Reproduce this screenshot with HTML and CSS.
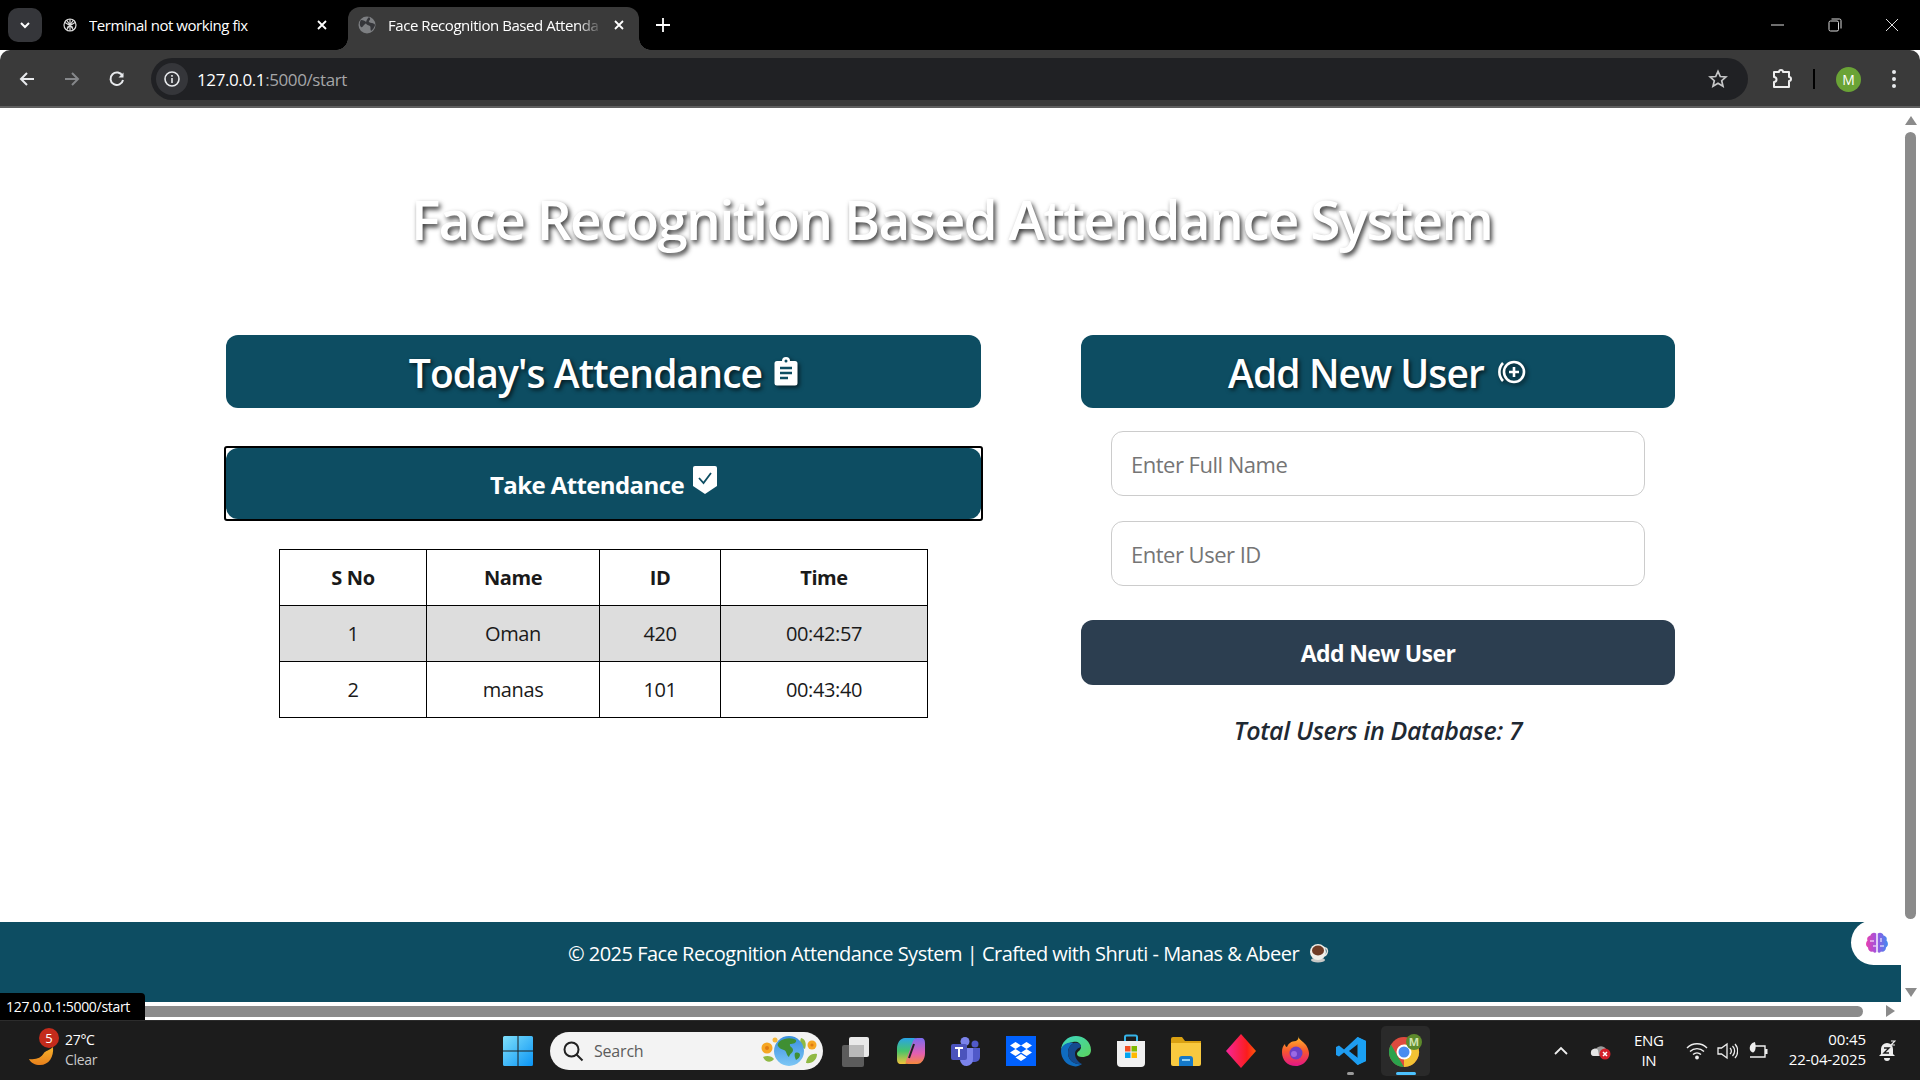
FILE: index.html
```html
<!DOCTYPE html>
<html lang="en">
<head>
    <meta charset="UTF-8">
    <meta name="viewport" content="width=device-width, initial-scale=1.0">
    <title>Face Recognition Based Attendance System</title>
    <link rel="stylesheet" href="styles.css">
</head>
<body>
<div class="window">
    <div class="tabstrip">
        <div class="tab-search">
            <svg width="14" height="14" viewBox="0 0 14 14"><path d="M3 5l4 4 4-4" fill="none" stroke="#fff" stroke-width="2"/></svg>
        </div>
        <div class="tab">
            <svg class="tab-icon" width="16" height="16" viewBox="0 0 16 16" fill="none" stroke="#ddd" stroke-width="1.2"><circle cx="8" cy="8" r="6"/><path d="M3 5.5l8 5M13 5.5l-8 5M8 2v12M4.5 3l7 10M11.5 3l-7 10"/></svg>
            <span class="tab-title">Terminal not working fix</span>
            <svg class="tab-close" width="12" height="12" viewBox="0 0 12 12"><path d="M2 2l8 8M10 2l-8 8" stroke="#fff" stroke-width="1.8"/></svg>
        </div>
        <div class="tab tab-active">
            <svg class="tab-icon" width="18" height="18" viewBox="0 0 18 18"><circle cx="9" cy="9" r="8.5" fill="#7d7f82"/><path d="M3 4c3 0 4 1 5 2s-1 2-2 3-2 3-3 2-2-4 0-7zM11 1c2 2 1 3 0 4s2 2 3 2 3 1 3 2-2 5-4 6c-1-2 0-4-1-5s-4-1-4-3 1-4 3-6z" fill="#35363a"/></svg>
            <span class="tab-title tab-title-fade">Face Recognition Based Attenda</span>
            <svg class="tab-close" width="12" height="12" viewBox="0 0 12 12"><path d="M2 2l8 8M10 2l-8 8" stroke="#fff" stroke-width="1.8"/></svg>
        </div>
        <svg class="new-tab" width="16" height="16" viewBox="0 0 16 16"><path d="M8 1v14M1 8h14" stroke="#fff" stroke-width="1.8"/></svg>
        <div class="window-controls">
            <svg width="14" height="14" viewBox="0 0 14 14"><path d="M0 7h13" stroke="#ddd"/></svg>
            <svg width="14" height="14" viewBox="0 0 14 14" fill="none" stroke="#ddd"><rect x="1" y="3" width="9.500" height="10" rx="1.500"/><path d="M3.500 1h8a1.500 1.500 0 0 1 1.500 1.500v8"/></svg>
            <svg width="14" height="14" viewBox="0 0 14 14"><path d="M1 1l12 12M13 1l-12 12" stroke="#ddd"/></svg>
        </div>
    </div>

    <div class="toolbar">
        <svg class="nav-icon" width="18" height="18" viewBox="0 0 18 18" fill="none" stroke="#e8eaed" stroke-width="2"><path d="M16 9H3M9 3L3 9l6 6"/></svg>
        <svg class="nav-icon" width="18" height="18" viewBox="0 0 18 18" fill="none" stroke="#85878a" stroke-width="2"><path d="M2 9h13M9 3l6 6-6 6"/></svg>
        <svg class="nav-icon" width="18" height="18" viewBox="0 0 18 18" fill="none" stroke="#e8eaed" stroke-width="2"><path d="M14.500 6A6.300 6.300 0 1 0 15 10"/><path d="M15.500 2.500v5h-5z" fill="#e8eaed" stroke="none"/></svg>
        <div class="omnibox">
            <span class="site-info">
                <svg width="18" height="18" viewBox="0 0 18 18" fill="none" stroke="#e8eaed" stroke-width="1.600"><circle cx="9" cy="9" r="7"/><path d="M9 8v5M9 5v1.800"/></svg>
            </span>
            <span class="url">127.0.0.1<span class="url-rest">:5000/start</span></span>
            <svg class="star" width="20" height="20" viewBox="0 0 20 20" fill="none" stroke="#c6c7c8" stroke-width="1.700"><path d="M10 2.300l2.300 5.200 5.600.5-4.200 3.700 1.300 5.500L10 14.300l-5 2.900 1.300-5.500L2.100 8l5.600-.5z"/></svg>
        </div>
        <svg class="puzzle" width="22" height="22" viewBox="0 0 22 22" fill="none" stroke="#eee" stroke-width="2"><path d="M3 4h5a2 2 0 0 1 4 0h6v5a2 2 0 0 1 0 4v6H3v-5a2.500 2.500 0 0 0 0-5z" stroke-linejoin="round"/></svg>
        <span class="toolbar-sep"></span>
        <span class="avatar">M</span>
        <svg class="menu-dots" width="4" height="18" viewBox="0 0 4 18" fill="#e8eaed"><circle cx="2" cy="2" r="2"/><circle cx="2" cy="9" r="2"/><circle cx="2" cy="16" r="2"/></svg>
    </div>

    <div class="viewport">
        <div class="page-col">
            <main class="page">
                <h1 class="page-title">Face Recognition Based Attendance System</h1>
                <div class="columns">
                    <section class="col-left">
                        <h2 class="panel-head">Today's Attendance
                            <svg class="head-icon" width="24" height="29" viewBox="0 0 24 29"><path d="M3 4h5a4 4 0 0 1 8 0h5a2.500 2.500 0 0 1 2.500 2.500V26A2.500 2.500 0 0 1 21 28.500H3A2.500 2.500 0 0 1 .5 26V6.500A2.500 2.500 0 0 1 3 4z" fill="#fff"/><path d="M6 11h12M6 16h12M6 21h8" stroke="#0d4d62" stroke-width="2.500"/><circle cx="12" cy="4" r="1.500" fill="#0d4d62"/></svg>
                        </h2>
                        <div class="take-wrap">
                            <a class="take-btn" href="#">Take Attendance
                                <svg class="shield" width="24" height="28" viewBox="0 0 24 28"><path d="M0 2a2 2 0 0 1 2-2h20a2 2 0 0 1 2 2v18l-12 8-12-8z" fill="#fff"/><path d="M6 12l4.500 5L18 7" fill="none" stroke="#0d4d62" stroke-width="1.800"/></svg>
                            </a>
                        </div>
                        <table class="att-table">
                            <thead>
                                <tr><th class="c1">S No</th><th class="c2">Name</th><th class="c3">ID</th><th>Time</th></tr>
                            </thead>
                            <tbody>
                                <tr class="stripe"><td>1</td><td>Oman</td><td>420</td><td>00:42:57</td></tr>
                                <tr><td>2</td><td>manas</td><td>101</td><td>00:43:40</td></tr>
                            </tbody>
                        </table>
                    </section>
                    <section class="col-right">
                        <h2 class="panel-head">Add New User
                            <svg class="head-icon" width="32" height="28" viewBox="0 0 32 28" fill="none" stroke="#fff" stroke-width="2.600"><path d="M7 5a13 13 0 0 0 0 18"/><circle cx="18" cy="14" r="10"/><path d="M18 9v10M13 14h10"/></svg>
                        </h2>
                        <form class="user-form">
                            <input class="field" type="text" placeholder="Enter Full Name">
                            <input class="field" type="text" placeholder="Enter User ID">
                            <button class="add-btn" type="button">Add New User</button>
                        </form>
                        <p class="total"><em>Total Users in Database: 7</em></p>
                    </section>
                </div>
            </main>
            <footer class="footer">
                <span>© 2025 Face Recognition Attendance System | Crafted with Shruti - Manas &amp; Abeer</span>
                <svg class="cup" width="20" height="20" viewBox="0 0 20 20"><path d="M14 5c4-1 5 2 4 5s-3 3-4 3" fill="none" stroke="#e5e3dd" stroke-width="1.500"/><ellipse cx="9" cy="17" rx="7" ry="2.500" fill="#c9c9c6"/><circle cx="9" cy="9" r="8" fill="#f1efe9"/><ellipse cx="9" cy="7.500" rx="6" ry="5" fill="#6f3c26"/></svg>
            </footer>
            <div class="hscroll"><div class="hscroll-thumb"></div><span class="arrow-right"></span></div>
        </div>
        <div class="vscroll">
            <span class="arrow-up"></span>
            <div class="vscroll-thumb"></div>
            <span class="arrow-down"></span>
        </div>
        <div class="link-tip">127.0.0.1:5000/start</div>
        <div class="brain-widget">
            <svg width="24" height="24" viewBox="0 0 24 24"><defs><linearGradient id="brainGrad" x1="0" x2="1"><stop offset="0" stop-color="#e83fb0"/><stop offset="0.500" stop-color="#9a55e0"/><stop offset="1" stop-color="#3f8cf0"/></linearGradient></defs><path d="M11.300 2.500C9 1 6 2 5.500 4.500 3 5 1.500 7 2.500 9.500.5 11.500.5 15 3 16.500c0 3 2.500 5 5 4 1 1.500 2.500 1.500 3.300.5zM12.700 2.500C15 1 18 2 18.500 4.500 21 5 22.500 7 21.500 9.500c2 2 2 5.500-.5 7 0 3-2.500 5-5 4-1 1.500-2.500 1.500-3.300.5z" fill="url(#brainGrad)"/><path d="M5 10h4M8 15h3M16 7v4M15 15h4" stroke="#fff" stroke-width="1"/></svg>
        </div>
    </div>

    <div class="taskbar">
        <div class="weather">
            <span class="weather-icon">
                <svg width="30" height="36" viewBox="0 0 30 36"><defs><linearGradient id="moon" x1="0" y1="0" x2="0" y2="1"><stop offset="0" stop-color="#f7b32b"/><stop offset="1" stop-color="#e8801c"/></linearGradient></defs><path d="M27 14c1 10-4 18-13 18-5 0-9-2-11-6 7 1 12-1 15-6 1-2 6-3 9-6z" fill="url(#moon)"/></svg>
                <span class="weather-badge">5</span>
            </span>
            <span class="weather-text"><span>27°C</span><span class="weather-sub">Clear</span></span>
        </div>
        <div class="task-center">
            <svg class="win-logo" width="30" height="30" viewBox="0 0 30 30"><defs><linearGradient id="winGrad" x1="0" y1="0" x2="1" y2="1"><stop offset="0" stop-color="#7fe0fb"/><stop offset="1" stop-color="#0a94f5"/></linearGradient></defs><path d="M0 1.500A1.500 1.500 0 0 1 1.500 0h13v14.500H0zM15.500 0h13A1.500 1.500 0 0 1 30 1.500v13H15.500zM0 15.500h14.500V30h-13A1.500 1.500 0 0 1 0 28.500zM15.500 15.500H30v13a1.500 1.500 0 0 1-1.500 1.500h-13z" fill="url(#winGrad)"/></svg>
            <div class="search-pill">
                <svg width="22" height="22" viewBox="0 0 22 22" fill="none" stroke="#222" stroke-width="2"><circle cx="9.500" cy="9.500" r="7"/><path d="M14.500 14.500l6 6"/></svg>
                <span class="search-text">Search</span>
                <svg class="search-art" width="64" height="36" viewBox="0 0 64 36"><defs><linearGradient id="sea" x1="0" y1="0" x2="0" y2="1"><stop offset="0" stop-color="#3a8fe0"/><stop offset="1" stop-color="#7cc6f5"/></linearGradient></defs><path d="M5 24c4-2 9-1 11 2-3 4-8 4-11-2zM59 21c-5-1-10 2-11 9 6 1 11-3 11-9zM43 5c4 1 6 5 4 11-4-2-6-6-4-11z" fill="#90b944"/><circle cx="31" cy="18" r="15" fill="url(#sea)"/><path d="M22 8c6-4 13-3 16-1 1 3-3 4-6 4-1 3 3 3 3 6s-3 3-4 7c-3-2-2-6-5-7s-5-2-6-4 1-4 2-5zM37 20c3-1 5 0 5 2s-2 4-4 5c-1-2-2-5-1-7z" fill="#3f8f33"/><circle cx="9" cy="15" r="5.500" fill="#f6a623"/><circle cx="9" cy="15" r="2" fill="#e07b12"/><circle cx="54" cy="12" r="4.500" fill="#f6a623"/><circle cx="54" cy="12" r="1.600" fill="#e07b12"/><circle cx="17" cy="7" r="2.500" fill="#f6b93b"/></svg>
            </div>
            <div class="task-icons">
                <span class="task-slot"><svg width="32" height="32" viewBox="0 0 32 32"><rect x="9" y="2" width="20" height="20" rx="2" fill="#e9e9e9"/><rect x="2" y="10" width="22" height="22" rx="2" fill="#5c5c5c"/><rect x="9" y="10" width="15" height="12" fill="#b9b9b9"/></svg></span>
                <span class="task-slot"><svg width="32" height="32" viewBox="0 0 32 32"><defs><linearGradient id="cop1" x1="0" y1="0" x2="0" y2="1"><stop offset="0" stop-color="#29a3e8"/><stop offset="0.500" stop-color="#46c46a"/><stop offset="1" stop-color="#f3c33a"/></linearGradient><linearGradient id="cop2" x1="0" y1="0" x2="0" y2="1"><stop offset="0" stop-color="#7a6cf0"/><stop offset="0.600" stop-color="#e45fb0"/><stop offset="1" stop-color="#f58a3c"/></linearGradient></defs><path d="M10 3h9c2 0 3 1 2 3l-7 20c-1 2-2 3-4 3H6c-3 0-4-2-4-5V14C2 8 5 3 10 3z" fill="url(#cop1)"/><path d="M22 29h-9c-2 0-3-1-2-3l7-20c1-2 2-3 4-3h4c3 0 4 2 4 5v10c0 6-3 11-8 11z" fill="url(#cop2)"/><path d="M19 9l-5 14" stroke="#222" stroke-width="2"/></svg></span>
                <span class="task-slot"><svg width="32" height="32" viewBox="0 0 32 32"><circle cx="15" cy="6.500" r="4.500" fill="#7b83eb"/><circle cx="25" cy="9" r="3.500" fill="#5059c9"/><path d="M20 13h10v9a5 5 0 0 1-5 5h-5z" fill="#5059c9"/><path d="M8 13h15v11a6.500 6.500 0 0 1-13 1z" fill="#7b83eb"/><rect x="1" y="9" width="16" height="16" rx="2" fill="#4b53bc"/><path d="M5 13h8M9 13v9" stroke="#fff" stroke-width="2"/></svg></span>
                <span class="task-slot"><svg width="30" height="30" viewBox="0 0 30 30"><rect width="30" height="30" fill="#0061fe"/><path d="M9.500 6l5.500 3.500L9.500 13 4 9.500zM20.500 6L26 9.500 20.500 13 15 9.500zM9.500 13l5.500 3.500-5.500 3.500L4 16.500zM20.500 13l5.500 3.500-5.500 3.500-5.500-3.500zM15 18l5.500 3.500L15 25l-5.500-3.500z" fill="#fff"/></svg></span>
                <span class="task-slot"><svg width="32" height="32" viewBox="0 0 32 32"><defs><linearGradient id="edge" x1="0" y1="0" x2="1" y2="1"><stop offset="0" stop-color="#3bd7c5"/><stop offset="1" stop-color="#5bd45c"/></linearGradient></defs><path d="M1 16C1 7 8 1 16 1s15 6 15 14c0 5-4 7-9 7-3 0-5-1-5-3 0-3 4-3 4-7s-4-6-8-5C7 8 1 11 1 16z" fill="url(#edge)"/><path d="M1 16c0-6 7-10 13-8-4 2-6 5-6 10 0 7 6 12 14 11-3 2-6 3-9 2C6 30 1 23 1 16z" fill="#0f6cc0"/><path d="M8 18c0-5 2-8 6-10 4-1 7 1 7 4-3 1-6 3-6 7s3 8 7 10c-8 1-14-4-14-11z" fill="#154b8f"/></svg></span>
                <span class="task-slot"><svg width="30" height="34" viewBox="0 0 30 34"><path d="M9 8V3a1.500 1.500 0 0 1 1.500-1.500h9A1.500 1.500 0 0 1 21 3v5" fill="none" stroke="#35b3e8" stroke-width="2"/><path d="M1 7h28v22a4 4 0 0 1-4 4H5a4 4 0 0 1-4-4z" fill="#f0f0f0"/><rect x="9" y="12" width="5.500" height="5.500" fill="#f25022"/><rect x="15.500" y="12" width="5.500" height="5.500" fill="#7fba00"/><rect x="9" y="18.500" width="5.500" height="5.500" fill="#00a4ef"/><rect x="15.500" y="18.500" width="5.500" height="5.500" fill="#ffb900"/></svg></span>
                <span class="task-slot"><svg width="32" height="30" viewBox="0 0 32 30"><path d="M1 3a2 2 0 0 1 2-2h9l3 4h16v4H1z" fill="#d9a012"/><path d="M1 7h30v21a2 2 0 0 1-2 2H3a2 2 0 0 1-2-2z" fill="#f8c93f"/><path d="M9 23a3 3 0 0 1 3-3h8a3 3 0 0 1 3 3v7H9z" fill="#1478c8"/><rect x="12" y="23" width="8" height="2" fill="#8fd0f5"/></svg></span>
                <span class="task-slot"><svg width="32" height="36" viewBox="0 0 32 36"><defs><linearGradient id="gem" x1="0" x2="1"><stop offset="0" stop-color="#f6259b"/><stop offset="0.700" stop-color="#fb1d1d"/><stop offset="1" stop-color="#fb5a0a"/></linearGradient></defs><path d="M16 1l15 17-15 17L1 18z" fill="url(#gem)"/></svg></span>
                <span class="task-slot"><svg width="30" height="32" viewBox="0 0 30 32"><defs><linearGradient id="fox" x1="0" y1="0" x2="0" y2="1"><stop offset="0" stop-color="#ffbd2e"/><stop offset="0.500" stop-color="#f8582e"/><stop offset="1" stop-color="#e31587"/></linearGradient></defs><path d="M17 1c1 4 5 5 8 9 3 5 4 9 2 13-3 6-8 8-12 8C6 31 1 25 1 17c0-4 1-6 3-8 0 2 1 3 2 3 1-3 4-6 9-6 2-1 3-3 2-5z" fill="url(#fox)"/><circle cx="15" cy="18" r="6.500" fill="#6b3fc7"/><circle cx="13" cy="19" r="3" fill="#9b6ae5"/></svg></span>
                <span class="task-slot task-open"><svg width="30" height="30" viewBox="0 0 30 30"><path d="M21.500 1L30 5v20l-8.500 4L8 16.500 3 20.500 0 19v-8l3-1.500 5 4z" fill="#1f9cf0"/><path d="M22 8l-9 7 9 7z" fill="#1a1a1a"/><path d="M21.500 1L30 5v20l-8.500 4z" fill="#1aa0f3"/></svg></span>
                <span class="task-slot task-active"><svg width="34" height="34" viewBox="0 0 34 34"><circle cx="15" cy="18" r="15" fill="#dd4b3e"/><path d="M15 33a15 15 0 0 0 13-22.500H15z" fill="#f3c234"/><path d="M2 10.500L9 23l6 10a15 15 0 0 1-13-22.500z" fill="#2ba24c"/><circle cx="15" cy="18" r="7.500" fill="#fff"/><circle cx="15" cy="18" r="5.500" fill="#4a8df0"/><circle cx="25" cy="8" r="8" fill="#5d8a2c"/><text class="chrome-m" x="25" y="12">M</text></svg></span>
            </div>
        </div>
        <div class="tray">
            <svg class="tray-chevron" width="16" height="10" viewBox="0 0 16 10"><path d="M2 8l6-6 6 6" fill="none" stroke="#eee" stroke-width="1.800"/></svg>
            <svg class="tray-cloud" width="22" height="18" viewBox="0 0 22 18"><path d="M1 12a4 4 0 0 1 5-5 6 6 0 0 1 10 0v7H4a3 3 0 0 1-3-2z" fill="#9a9a9a"/><path d="M1 11a4 4 0 0 1 7-3l1 6H4a3 3 0 0 1-3-3z" fill="#e5e5e5"/><circle cx="15" cy="12" r="5.500" fill="#d3202a"/><path d="M13 10l4 4M17 10l-4 4" stroke="#fff" stroke-width="1.500"/></svg>
            <span class="tray-lang"><span>ENG</span><span>IN</span></span>
            <svg width="22" height="18" viewBox="0 0 22 18" fill="none" stroke="#eee" stroke-width="1.400"><path d="M1 6a14 14 0 0 1 20 0M4 9.500a10 10 0 0 1 14 0M7 12.500a6 6 0 0 1 8 0"/><circle cx="11" cy="15.500" r="1.200" fill="#eee"/></svg>
            <svg width="21" height="18" viewBox="0 0 21 18" fill="none" stroke="#eee" stroke-width="1.300"><path d="M1 6h3.500L10 2v14l-5.500-4H1z"/><path d="M13 6a4 4 0 0 1 0 6M15.500 4a7 7 0 0 1 0 10M18 2a10.500 10.500 0 0 1 0 14"/></svg>
            <svg width="22" height="20" viewBox="0 0 22 20"><path d="M8 5h10v11H3" fill="none" stroke="#eee" stroke-width="1.400"/><path d="M18 8h2.500v5H18z" fill="#eee"/><path d="M8 1c-4 1-6 4-5 8 1 2 3 3 4 2 2-2 2-6 1-10z" fill="#eee"/></svg>
            <span class="tray-clock"><span>00:45</span><span>22-04-2025</span></span>
            <svg class="tray-bell" width="18" height="22" viewBox="0 0 18 22"><path d="M9 3a6 6 0 0 1 6 6v5l2 2H1l2-2V9a6 6 0 0 1 6-6z" fill="#eee"/><path d="M6 18h6a3 3 0 0 1-6 0z" fill="#eee"/><path d="M6 8h5l-5 5h5" fill="none" stroke="#1c1c1c" stroke-width="1.400"/><path d="M13 1h4l-4 4h4" fill="none" stroke="#eee" stroke-width="1.200"/></svg>
        </div>
    </div>
</div>
</body>
</html>
```

FILE: styles.css
```css
html, body {
    margin: 0;
    padding: 0;
    height: 100%;
    overflow: hidden;
}
body {
    font-family: "Open Sans", "Noto Sans", sans-serif;
    color: #1a1a1a;
}
.window {
    display: flex;
    flex-direction: column;
    width: 1920px;
    height: 1080px;
}

/* browser tabs */
.tabstrip {
    display: flex;
    align-items: center;
    height: 50px;
    background-color: #000;
    flex: none;
}
.tab-search {
    display: flex;
    align-items: center;
    justify-content: center;
    width: 34px;
    height: 34px;
    margin-left: 8px;
    margin-top: -1px;
    background-color: #35363a;
    border-radius: 10px;
}
.tab {
    display: flex;
    align-items: center;
    width: 300px;
    height: 36px;
    padding: 0 14px 0 20px;
    box-sizing: border-box;
    color: #fff;
    font-size: 15px;
    letter-spacing: -0.45px;
}
.tab-active {
    position: relative;
    width: 291px;
    height: 43px;
    margin-top: 7px;
    margin-left: 6px;
    padding: 0 14px 7px 10px;
    background-color: #3a3a3a;
    border-radius: 12px 12px 0 0;
}
.tab-active::before,
.tab-active::after {
    content: "";
    position: absolute;
    bottom: 0;
    width: 12px;
    height: 12px;
}
.tab-active::before {
    left: -12px;
    background: radial-gradient(circle at 0 0, transparent 11.5px, #3a3a3a 12px);
}
.tab-active::after {
    right: -12px;
    background: radial-gradient(circle at 100% 0, transparent 11.5px, #3a3a3a 12px);
}
.tab-icon {
    flex: none;
    margin-right: 11px;
}
.tab-active .tab-icon {
    margin-right: 12px;
}
.tab-title {
    flex: 1;
    white-space: nowrap;
    overflow: hidden;
}
.tab-title-fade {
    -webkit-mask-image: linear-gradient(to right, #000 88%, transparent 100%);
    mask-image: linear-gradient(to right, #000 88%, transparent 100%);
}
.tab-close {
    flex: none;
    margin-left: 10px;
}
.new-tab {
    margin-left: 16px;
}
.window-controls {
    display: flex;
    align-items: center;
    gap: 43px;
    margin-left: auto;
    margin-right: 21px;
}

/* address bar */
.toolbar {
    display: flex;
    align-items: center;
    height: 58px;
    flex: none;
    box-sizing: border-box;
    padding: 2px 0 0 18px;
    background-color: #3a3a3a;
    border-bottom: 2px solid #5f5f5f;
    border-radius: 10px 10px 0 0;
}
.nav-icon {
    flex: none;
    margin-right: 27px;
}
.nav-icon:nth-child(3) {
    margin-right: 25px;
}
.omnibox {
    display: flex;
    align-items: center;
    width: 1597px;
    height: 42px;
    border-radius: 21px;
    background-color: #202124;
    box-sizing: border-box;
    padding-left: 5px;
    padding-right: 20px;
}
.site-info {
    display: flex;
    align-items: center;
    justify-content: center;
    width: 32px;
    height: 32px;
    border-radius: 50%;
    background-color: #35363a;
    margin-right: 9px;
}
.url {
    color: #fff;
    font-size: 17px;
    letter-spacing: -0.4px;
}
.url-rest {
    color: #a5a6a8;
}
.star {
    margin-left: auto;
}
.puzzle {
    margin-left: 23px;
    flex: none;
}
.toolbar-sep {
    width: 2px;
    height: 20px;
    background-color: #000;
    margin-left: 20px;
    flex: none;
}
.avatar {
    display: flex;
    align-items: center;
    justify-content: center;
    width: 25px;
    height: 25px;
    margin-left: 21px;
    border-radius: 50%;
    background-color: #6aa336;
    color: #fff;
    font-size: 14px;
    flex: none;
}
.menu-dots {
    margin-left: 31px;
    flex: none;
}

/* page area */
.viewport {
    position: relative;
    display: flex;
    flex: 1;
    min-height: 0;
}
.page-col {
    display: flex;
    flex-direction: column;
    flex: 1;
    min-width: 0;
    background-color: #fff;
}
.page {
    flex: 1;
    min-height: 0;
}
.page-title {
    margin: 0;
    padding: 75px 0 0 2px;
    text-align: center;
    font-size: 55px;
    line-height: 72px;
    font-weight: 600;
    letter-spacing: -1.75px;
    color: #fff;
    text-shadow: 2px 3px 5px rgba(0, 0, 0, 0.8);
}
.columns {
    display: grid;
    grid-template-columns: 755px 594px;
    column-gap: 100px;
    padding: 80px 0 0 226px;
}
.panel-head {
    display: flex;
    align-items: center;
    justify-content: center;
    gap: 12px;
    height: 73px;
    box-sizing: border-box;
    padding-top: 2px;
    margin: 0;
    background-color: #0d4d62;
    border-radius: 12px;
    color: #fff;
    font-size: 39px;
    font-weight: 600;
    letter-spacing: -0.9px;
    text-shadow: 2px 2px 4px rgba(0, 0, 0, 0.7);
}
.head-icon {
    filter: drop-shadow(2px 2px 2px rgba(0, 0, 0, 0.6));
    margin-top: -2px;
}
.take-wrap {
    margin: 38px -2px 0;
    border: 2px solid #000;
    border-radius: 3px;
}
.take-btn {
    display: flex;
    align-items: center;
    justify-content: center;
    gap: 9px;
    height: 71px;
    box-sizing: border-box;
    padding-top: 2px;
    background-color: #0d4d62;
    border-radius: 12px;
    color: #fff;
    font-size: 24px;
    font-weight: 700;
    letter-spacing: -0.6px;
    text-decoration: none;
}
.shield {
    margin-top: -10px;
}
.att-table {
    border-collapse: collapse;
    width: 649px;
    margin: 28px 0 0 53px;
    font-size: 20px;
    letter-spacing: -0.4px;
}
.att-table th,
.att-table td {
    border: 1px solid #000;
    height: 55px;
    padding: 0;
    text-align: center;
}
.att-table th {
    font-weight: 700;
}
.att-table .c1 { width: 146px; }
.att-table .c2 { width: 172px; }
.att-table .c3 { width: 120px; }
.stripe {
    background-color: #ddd;
}
.user-form {
    display: flex;
    flex-direction: column;
    align-items: center;
}
.field {
    width: 534px;
    height: 65px;
    box-sizing: border-box;
    margin-top: 23px;
    padding: 0 19px;
    border: 1px solid #ccc;
    border-radius: 12px;
    font-family: inherit;
    font-size: 22px;
    letter-spacing: -0.5px;
    outline: none;
}
.field + .field {
    margin-top: 25px;
}
.field::placeholder {
    color: #757575;
}
.add-btn {
    width: 100%;
    height: 65px;
    margin-top: 34px;
    border: none;
    border-radius: 12px;
    background-color: #2c3e50;
    color: #fff;
    font-family: inherit;
    font-size: 23px;
    font-weight: 700;
    letter-spacing: -0.6px;
}
.total {
    margin: 28px 0 0;
    text-align: center;
    font-size: 25px;
    font-weight: 600;
    letter-spacing: -0.35px;
    color: #1f2933;
}
.footer {
    display: flex;
    align-items: center;
    justify-content: center;
    gap: 10px;
    height: 80px;
    flex: none;
    padding-right: 4px;
    padding-bottom: 18px;
    box-sizing: border-box;
    background-color: #0d4d62;
    color: #fff;
    font-size: 20px;
    letter-spacing: -0.5px;
}
.hscroll {
    display: flex;
    align-items: center;
    height: 18px;
    flex: none;
}
.hscroll-thumb {
    width: 1863px;
    height: 11px;
    background-color: #8b8b8b;
    border-radius: 0 6px 6px 0;
}
.arrow-right {
    margin-left: 23px;
    border-left: 9px solid #8b8b8b;
    border-top: 6px solid transparent;
    border-bottom: 6px solid transparent;
}
.vscroll {
    display: flex;
    flex-direction: column;
    align-items: center;
    width: 19px;
    flex: none;
    background-color: #fff;
    padding-top: 8px;
    box-sizing: border-box;
}
.arrow-up {
    border-bottom: 9px solid #8b8b8b;
    border-left: 6px solid transparent;
    border-right: 6px solid transparent;
}
.vscroll-thumb {
    width: 11px;
    height: 787px;
    margin-top: 7px;
    background-color: #8b8b8b;
    border-radius: 6px;
}
.arrow-down {
    margin-top: 69px;
    border-top: 9px solid #8b8b8b;
    border-left: 6px solid transparent;
    border-right: 6px solid transparent;
}
.link-tip {
    position: absolute;
    left: 0;
    bottom: 0;
    width: 145px;
    height: 27px;
    line-height: 27px;
    padding-left: 6px;
    box-sizing: border-box;
    background-color: #000;
    border-radius: 0 4px 0 0;
    color: #fff;
    font-size: 14px;
    letter-spacing: -0.3px;
}
.brain-widget {
    position: absolute;
    right: 19px;
    top: 812px;
    display: flex;
    align-items: center;
    width: 36px;
    height: 45px;
    padding-left: 14px;
    background-color: #fff;
    border-radius: 23px 0 0 23px;
}

/* windows taskbar */
.taskbar {
    display: grid;
    grid-template-columns: 503px auto 1fr;
    align-items: center;
    height: 60px;
    flex: none;
    background-color: #1c1c1c;
    color: #fff;
    border-top: 1px solid #2c2c2c;
    box-sizing: border-box;
}
.weather {
    display: flex;
    align-items: center;
    padding-left: 26px;
}
.weather-icon {
    position: relative;
    display: block;
    width: 30px;
    height: 36px;
}
.weather-badge {
    position: absolute;
    left: 13px;
    top: -5px;
    width: 20px;
    height: 20px;
    line-height: 20px;
    text-align: center;
    border-radius: 50%;
    background-color: #c42b1c;
    font-size: 13px;
}
.weather-text {
    display: flex;
    flex-direction: column;
    margin-left: 9px;
    margin-top: -2px;
    font-size: 14px;
    line-height: 20px;
    letter-spacing: -0.3px;
}
.weather-sub {
    color: #c9c9c9;
}
.task-center {
    display: flex;
    align-items: center;
}
.win-logo {
    margin-right: 17px;
}
.search-pill {
    display: flex;
    align-items: center;
    width: 273px;
    height: 38px;
    box-sizing: border-box;
    padding: 0 1px 0 12px;
    background-color: #f3f3f3;
    border-radius: 19px;
    color: #5c5c5c;
    font-size: 16px;
}
.search-text {
    margin-left: 10px;
    letter-spacing: -0.2px;
}
.search-art {
    margin-left: auto;
}
.task-icons {
    display: flex;
    align-items: center;
    margin-left: 5px;
}
.task-slot {
    position: relative;
    display: flex;
    align-items: center;
    justify-content: center;
    width: 55px;
    height: 50px;
}
.task-open::after,
.task-active::after {
    content: "";
    position: absolute;
    bottom: 1px;
    left: 50%;
    height: 3px;
    border-radius: 2px;
}
.task-open::after {
    width: 7px;
    margin-left: -4px;
    background-color: #9a9a9a;
}
.task-active {
    background-color: #2a2a2a;
    border-radius: 5px;
    width: 49px;
    margin-left: 3px;
}
.task-active::after {
    width: 20px;
    margin-left: -10px;
    background-color: #4cc2ff;
}
.chrome-m {
    fill: #cfe3b0;
    font-size: 11px;
    font-weight: 700;
    text-anchor: middle;
}
.tray {
    display: flex;
    align-items: center;
    justify-content: flex-end;
    padding-right: 24px;
    font-size: 15px;
}
.tray-chevron {
    margin-right: 12px;
}
.tray-cloud {
    margin-right: 22px;
}
.tray-lang {
    display: flex;
    flex-direction: column;
    align-items: center;
    line-height: 20px;
    margin-right: 22px;
    margin-top: -2px;
    letter-spacing: -0.3px;
}
.tray > svg + svg {
    margin-left: 9px;
}
.tray-clock {
    display: flex;
    flex-direction: column;
    align-items: flex-end;
    line-height: 20px;
    margin-left: 20px;
    margin-right: 12px;
    margin-top: -3px;
    letter-spacing: -0.1px;
}
```
